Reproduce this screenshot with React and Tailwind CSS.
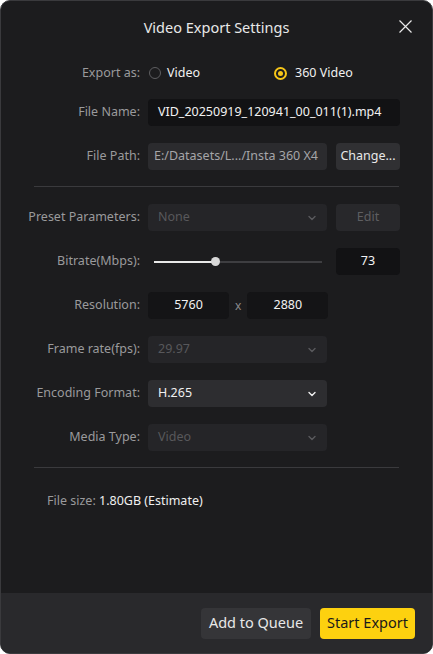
import React from "react";

const font = { fontFamily: '"Segoe UI", "Noto Sans", "Open Sans", sans-serif' };

function Chevron({ color = "#6b6b6e" }) {
  return (
    <svg width="10" height="10" viewBox="0 0 10 10" fill="none">
      <path d="M2 3.5 L5 6.5 L8 3.5" stroke={color} strokeWidth="1.4" strokeLinecap="round" strokeLinejoin="round" />
    </svg>
  );
}

function Label({ children }) {
  return <div className="w-[139px] shrink-0 text-right text-[12.5px] text-[#9a9a9c]">{children}</div>;
}

function Select({ value, disabled }) {
  return (
    <div
      className={`flex h-[27px] w-[179px] items-center justify-between rounded-[4px] pl-[10px] pr-[10px] text-[12.5px] ${
        disabled ? "bg-[#252528] text-[#58585b]" : "bg-[#2d2d30] text-[#f0f0f0]"
      }`}
    >
      <span>{value}</span>
      <Chevron color={disabled ? "#5a5a5d" : "#f0f0f0"} />
    </div>
  );
}

export default function App() {
  return (
    <div className="h-[654px] w-[433px] bg-white" style={font}>
      <div className="flex h-full w-full flex-col overflow-hidden rounded-[10px] border border-[#3a3a3d] bg-[#1c1c1e]">
        <div className="relative flex h-[54px] shrink-0 items-center justify-center">
          <span className="text-[14.5px] text-[#e8e8e8]">Video Export Settings</span>
          <svg className="absolute right-[20px] top-[19px]" width="13" height="13" viewBox="0 0 13 13">
            <path d="M0.5 0.5 L12.5 12.5 M12.5 0.5 L0.5 12.5" stroke="#e8e8e8" strokeWidth="1.2" />
          </svg>
        </div>

        <div className="flex h-[36px] items-center gap-[9px]">
          <Label>Export as:</Label>
          <div className="flex items-center">
            <div className="h-[12px] w-[12px] rounded-full border-[1.5px] border-[#5e5e61]" />
            <span className="ml-[6px] text-[12.5px] text-[#f0f0f0]">Video</span>
          </div>
          <div className="ml-[65px] flex items-center">
            <div className="flex h-[13px] w-[13px] items-center justify-center rounded-full border-[2px] border-[#f5c518]">
              <div className="h-[5px] w-[5px] rounded-full bg-[#f5c518]" />
            </div>
            <span className="ml-[8px] text-[12.5px] text-[#f0f0f0]">360 Video</span>
          </div>
        </div>

        <div className="mt-[8px] flex items-center gap-[8px]">
          <Label>File Name:</Label>
          <div className="flex h-[27px] w-[252px] items-center rounded-[4px] bg-[#121214] pl-[10px] text-[12.5px] text-[#f2f2f2]">
            VID_20250919_120941_00_011(1).mp4
          </div>
        </div>

        <div className="mt-[17px] flex items-center gap-[8px]">
          <Label>File Path:</Label>
          <div className="flex h-[27px] w-[179px] items-center rounded-[4px] bg-[#2b2b2e] pl-[6px] text-[12.5px] text-[#a5a5a8]">
            E:/Datasets/L.../Insta 360 X4
          </div>
          <div className="ml-[1px] flex h-[27px] w-[64px] items-center justify-center rounded-[4px] bg-[#303033] text-[12.5px] text-[#e8e8e8]">
            Change...
          </div>
        </div>

        <div className="mx-[33px] mt-[16px] h-px bg-[#3a3a3d]" />

        <div className="mt-[17px] flex items-center gap-[8px]">
          <Label>Preset Parameters:</Label>
          <Select value="None" disabled />
          <div className="ml-[1px] flex h-[27px] w-[64px] items-center justify-center rounded-[4px] bg-[#28282b] text-[12.5px] text-[#5e5e61]">
            Edit
          </div>
        </div>

        <div className="mt-[17px] flex items-center gap-[8px]">
          <Label>Bitrate(Mbps):</Label>
          <div className="relative ml-[6px] flex h-[27px] w-[168px] items-center">
            <div className="h-[2px] w-[62px] bg-[#e8e8e8]" />
            <div className="h-[2px] flex-1 bg-[#3e3e41]" />
            <div className="absolute left-[57px] top-[9px] h-[9px] w-[9px] rounded-full bg-[#d8d8d8]" />
          </div>
          <div className="ml-[6px] flex h-[27px] w-[64px] items-center justify-center rounded-[4px] bg-[#121214] text-[12.5px] text-[#f2f2f2]">
            73
          </div>
        </div>

        <div className="mt-[17px] flex items-center gap-[8px]">
          <Label>Resolution:</Label>
          <div className="flex items-center gap-[6px]">
            <div className="flex h-[27px] w-[81px] items-center justify-center rounded-[4px] bg-[#141416] text-[12.5px] text-[#f2f2f2]">
              5760
            </div>
            <span className="text-[12px] text-[#8a8a8c]">x</span>
            <div className="flex h-[27px] w-[81px] items-center justify-center rounded-[4px] bg-[#141416] text-[12.5px] text-[#f2f2f2]">
              2880
            </div>
          </div>
        </div>

        <div className="mt-[17px] flex items-center gap-[8px]">
          <Label>Frame rate(fps):</Label>
          <Select value="29.97" disabled />
        </div>

        <div className="mt-[17px] flex items-center gap-[8px]">
          <Label>Encoding Format:</Label>
          <Select value="H.265" />
        </div>

        <div className="mt-[17px] flex items-center gap-[8px]">
          <Label>Media Type:</Label>
          <Select value="Video" disabled />
        </div>

        <div className="mx-[33px] mt-[16px] h-px bg-[#3a3a3d]" />

        <div className="ml-[46px] mt-[23px] text-[12.5px] leading-[20px]">
          <span className="text-[#9a9a9c]">File size: </span>
          <span className="text-[#f0f0f0]">1.80GB (Estimate)</span>
        </div>

        <div className="flex-1" />

        <div className="flex h-[60px] shrink-0 items-center justify-end gap-[9px] bg-[#29292c] pr-[17px]">
          <div className="flex h-[31px] w-[110px] items-center justify-center rounded-[4px] bg-[#353538] text-[14.5px] text-[#e8e8e8]">
            Add to Queue
          </div>
          <div className="flex h-[31px] w-[95px] items-center justify-center rounded-[4px] bg-[#fdd10f] text-[14.5px] text-[#1a1a1a]">
            Start Export
          </div>
        </div>
      </div>
    </div>
  );
}
